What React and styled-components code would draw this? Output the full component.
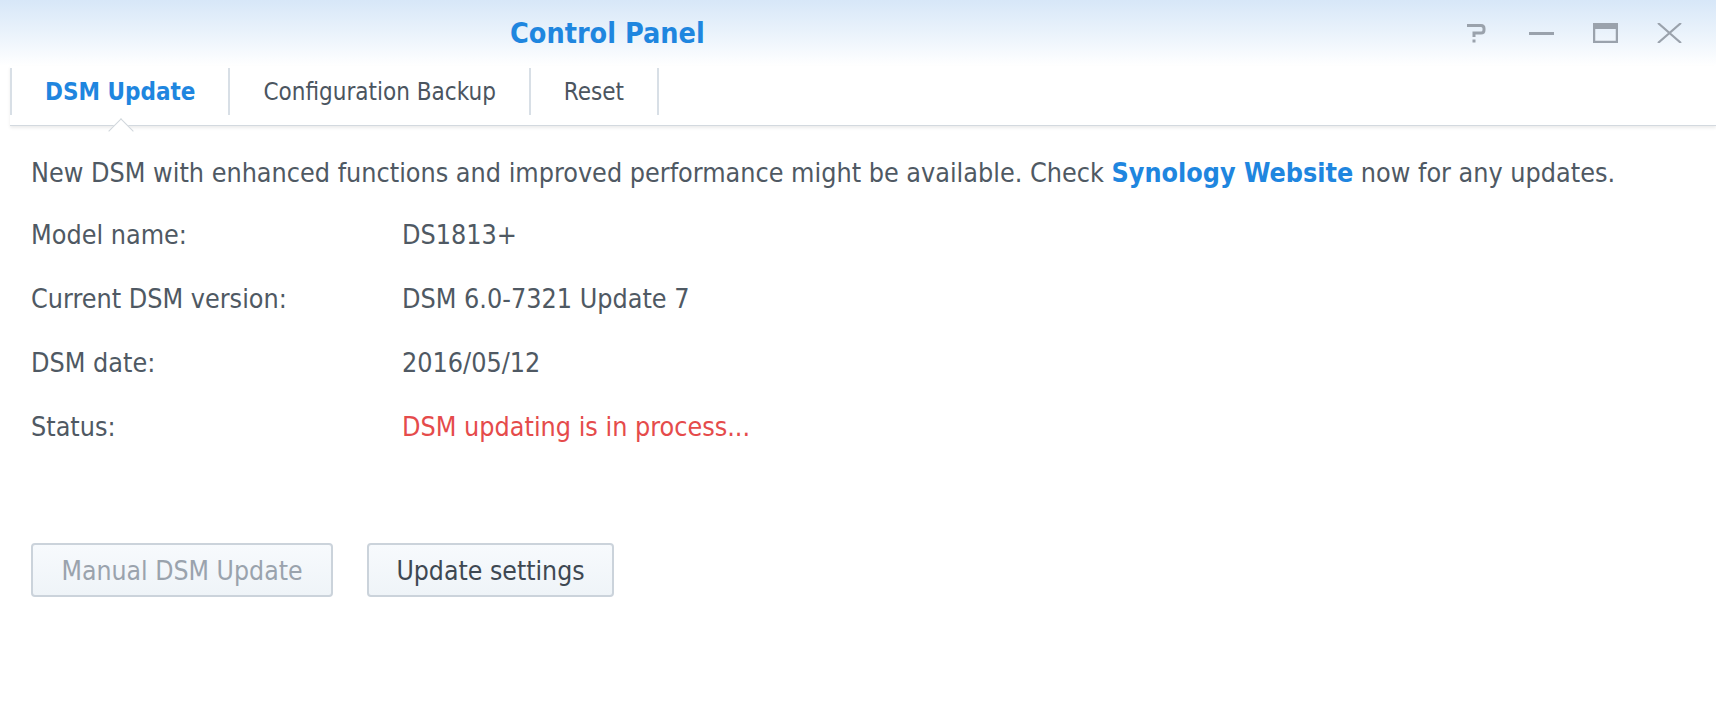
import styled, { createGlobalStyle } from 'styled-components';

const Global = createGlobalStyle`
  body {
    margin: 0;
    background: #ffffff;
    font-family: "DejaVu Sans Condensed", "DejaVu Sans", Verdana, sans-serif;
  }
`

const Window = styled.div`
  width: 1716px;
  height: 710px;
  background: #ffffff;
  display: flex;
  flex-direction: column;
`

const Header = styled.div`
  height: 66px;
  display: flex;
  align-items: center;
  background: linear-gradient(#d7e7f8 0%, #eef5fc 60%, #ffffff 100%);
`

const Title = styled.div`
  flex: 1;
  padding-left: 510px;
  font-size: 28.5px;
  font-weight: bold;
  color: #1f86df;
`

const Controls = styled.div`
  display: flex;
  align-items: center;
  gap: 39px;
  padding-right: 34px;
`

const Ctrl = styled.svg`
  width: 25px;
  height: 20px;
  display: block;
`

const TabBar = styled.div`
  height: 59px;
  margin-left: 10px;
  display: flex;
  align-items: flex-start;
  border-bottom: 1px solid #d3d9df;
  box-shadow: 0 2px 3px rgba(0, 0, 0, 0.08);
`

const Tabs = styled.div`
  display: flex;
  height: 47px;
  margin-top: 2px;
  border-left: 2px solid #d8dfe6;
`

const Tab = styled.div`
  position: relative;
  display: flex;
  align-items: center;
  padding: 0 33px;
  border-right: 2px solid #d8dfe6;
  font-size: 24px;
  font-weight: ${p => (p.active ? 'bold' : 'normal')};
  color: ${p => (p.active ? '#1f86df' : '#4b555f')};
`

const Caret = styled.div`
  position: absolute;
  left: 50%;
  bottom: -25px;
  width: 17px;
  height: 17px;
  margin-left: -8.5px;
  background: #ffffff;
  border-left: 1px solid #d0d6dc;
  border-top: 1px solid #d0d6dc;
  transform: rotate(45deg);
`

const Content = styled.div`
  padding: 32px 31px 0;
  color: #4f5963;
  font-size: 26.7px;
`

const Desc = styled.div`
  line-height: 30px;
  margin-bottom: 14px;
`

const Link = styled.span`
  color: #1f86df;
  font-weight: bold;
`

const Row = styled.div`
  display: grid;
  grid-template-columns: 371px 1fr;
  height: 64px;
  align-items: center;
`

const Value = styled.div`
  color: ${p => (p.warn ? '#e54b4b' : '#4f5963')};
`

const Buttons = styled.div`
  display: flex;
  gap: 34px;
  margin-top: 85px;
`

const Button = styled.div`
  height: 54px;
  width: ${p => p.w}px;
  box-sizing: border-box;
  display: flex;
  align-items: center;
  justify-content: center;
  border: 2px solid #cbd3db;
  border-radius: 4px;
  background: linear-gradient(#f7fafd, #eff4f8);
  font-size: 26.4px;
  color: ${p => (p.disabled ? '#9aa3ad' : '#3e4852')};
`

const gray = '#9aa2ac'

export default function App() {
  return (
    <Window>
      <Global />
      <Header>
        <Title>Control Panel</Title>
        <Controls>
          <Ctrl viewBox="0 0 25 20">
            <path d="M2 2.5 H16 Q19 2.5 19 5.5 V7 Q19 10 16 10 H9 V14" fill="none" stroke={gray} strokeWidth="3" />
            <rect x="7.5" y="16.5" width="3" height="3" fill={gray} />
          </Ctrl>
          <Ctrl viewBox="0 0 25 20">
            <rect x="0" y="9" width="25" height="3" fill={gray} />
          </Ctrl>
          <Ctrl viewBox="0 0 25 20">
            <rect x="1" y="1" width="23" height="18" fill="none" stroke={gray} strokeWidth="2.5" />
            <rect x="0" y="0" width="25" height="6" fill={gray} />
          </Ctrl>
          <Ctrl viewBox="0 0 25 20">
            <path d="M1 0 L24 20 M24 0 L1 20" stroke={gray} strokeWidth="2.2" />
          </Ctrl>
        </Controls>
      </Header>
      <TabBar>
        <Tabs>
          <Tab active>
            DSM Update
            <Caret />
          </Tab>
          <Tab>Configuration Backup</Tab>
          <Tab>Reset</Tab>
        </Tabs>
      </TabBar>
      <Content>
        <Desc>
          New DSM with enhanced functions and improved performance might be available. Check <Link>Synology Website</Link> now for any updates.
        </Desc>
        <Row>
          <div>Model name:</div>
          <Value>DS1813+</Value>
        </Row>
        <Row>
          <div>Current DSM version:</div>
          <Value>DSM 6.0-7321 Update 7</Value>
        </Row>
        <Row>
          <div>DSM date:</div>
          <Value>2016/05/12</Value>
        </Row>
        <Row>
          <div>Status:</div>
          <Value warn>DSM updating is in process...</Value>
        </Row>
        <Buttons>
          <Button w={302} disabled>Manual DSM Update</Button>
          <Button w={247}>Update settings</Button>
        </Buttons>
      </Content>
    </Window>
  )
}
